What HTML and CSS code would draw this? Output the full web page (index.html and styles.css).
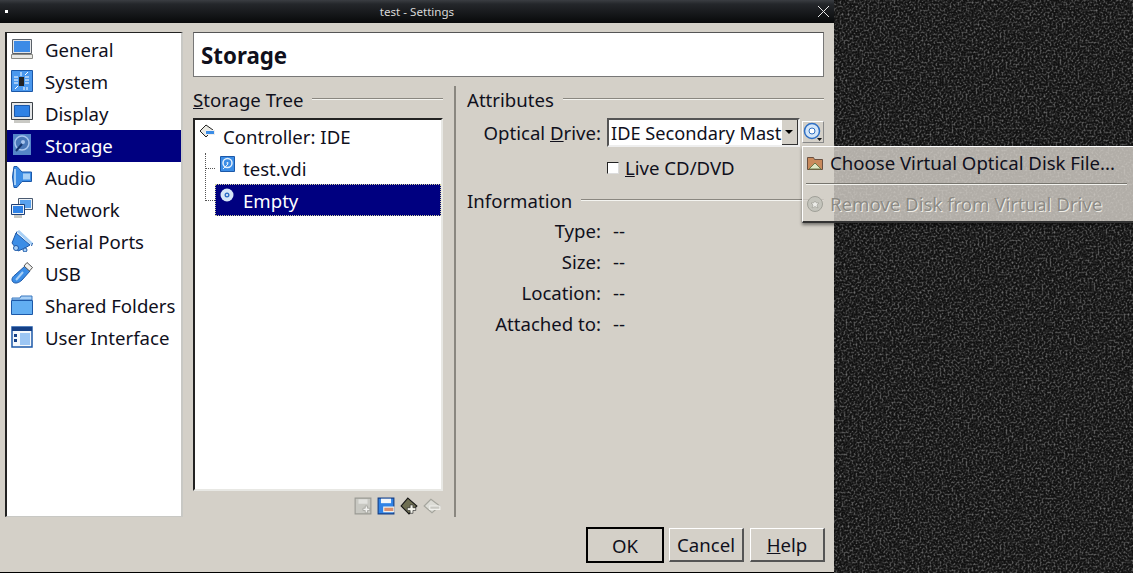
FILE: index.html
```html
<!DOCTYPE html>
<html lang="en">
<head>
<meta charset="UTF-8">
<title>test - Settings</title>
<link rel="stylesheet" href="styles.css">
</head>
<body>
<svg class="noise" aria-hidden="true">
  <filter id="grain">
    <feTurbulence type="fractalNoise" baseFrequency="0.5" numOctaves="3" seed="9"/>
    <feColorMatrix type="matrix" values="0 0 0 0 0.4  0 0 0 0 0.4  0 0 0 0 0.4  1.5 0 0 0 -0.66"/>
  </filter>
  <rect width="100%" height="100%" fill="#121212"/>
  <rect width="100%" height="100%" filter="url(#grain)"/>
</svg>

<div class="window">
  <div class="titlebar">
    <span class="title-dot"></span>
    <span class="title-text">test - Settings</span>
    <svg class="title-close" width="13" height="13" viewBox="0 0 13 13"><path d="M1 1l11 11M12 1L1 12" stroke="#e8e8e8" stroke-width="1" fill="none"/></svg>
  </div>

  <div class="content">
    <ul class="nav">
      <li class="nav-item">
        <svg class="nav-icon" viewBox="0 0 22 22"><path d="M1.500 1.500h19v14h-19z" fill="#e4e6e8" stroke="#5a6068"/><path d="M3 3h16v11H3z" fill="#3d8be6"/><path d="M.5 16.500h21v4H.5z" fill="#e8e8e4" stroke="#8a8a84"/></svg>
        <span>General</span>
      </li>
      <li class="nav-item">
        <svg class="nav-icon" viewBox="0 0 22 22"><path d="M.5 .5h21v21H.5z" fill="#4a98ee" stroke="#1c58a8"/><path d="M8 7h5v9H8z" fill="#222"/><path d="M3 7h4M3 10h4M3 13h4M14 7h4M14 10h4M14 13h4M4 19l3-3M10 2v4M14 5l3-3M13 17v3M16 17v3" stroke="#fff" fill="none"/></svg>
        <span>System</span>
      </li>
      <li class="nav-item">
        <svg class="nav-icon" viewBox="0 0 22 22"><path d="M.5 .5h21v17H.5z" fill="#e4e6e8" stroke="#3c4248"/><path d="M3.500 3.500h15v11h-15z" fill="#2f82e6" stroke="#1c58a8"/><path d="M3 18h16v3H3z" fill="#c9c9c4"/></svg>
        <span>Display</span>
      </li>
      <li class="nav-item nav-selected">
        <svg class="nav-icon" viewBox="0 0 22 22"><path d="M2 0h18v21H2z" fill="#5586c8"/><circle cx="11" cy="9" r="7" fill="#4a78b8" stroke="#a9c6ee" stroke-width="1.500"/><circle cx="12" cy="8" r="2" fill="#a9c6ee"/><path d="M5 17l6-7" stroke="#16366e" stroke-width="2"/></svg>
        <span>Storage</span>
      </li>
      <li class="nav-item">
        <svg class="nav-icon" viewBox="0 0 22 22"><path d="M3 .5h3L11 6h9.500v9.500H11L6 21.500H3Q0 11 3 .5z" fill="#3b8de6" stroke="#1c58a8"/><path d="M12 7.500h7v6h-7z" fill="#a8d0f6"/><path d="M4 3v16" stroke="#a8d0f6" stroke-width="2"/></svg>
        <span>Audio</span>
      </li>
      <li class="nav-item">
        <svg class="nav-icon" viewBox="0 0 22 22"><path d="M7.500 .5h14v11h-14z" fill="#eef2f6" stroke="#4a5a70"/><path d="M9 2h11v8H9z" fill="#5aa2ee"/><path d="M.5 6.500h13v10H.5z" fill="#eef2f6" stroke="#1c3f78"/><path d="M2 8h10v7H2z" fill="#2f82e6"/><path d="M3 17h8v3H3z" fill="#c8c8c2"/></svg>
        <span>Network</span>
      </li>
      <li class="nav-item">
        <svg class="nav-icon" viewBox="0 0 22 22"><path d="M5 3l14 12-5 3-7 3-6-8z" fill="#3b8de6" stroke="#1c58a8"/><path d="M7 1l14 13" stroke="#a8d0f6" stroke-width="3"/><path d="M6 1.500l-1 2M20.500 16l1-3" stroke="#1c58a8"/><circle cx="5" cy="18" r="2.500" fill="#a8d0f6" stroke="#1c58a8"/><circle cx="14" cy="20" r="2" fill="#a8d0f6" stroke="#1c58a8"/></svg>
        <span>Serial Ports</span>
      </li>
      <li class="nav-item">
        <svg class="nav-icon" viewBox="0 0 22 22"><path d="M14 4l5 5-8 9c-3 3-7 4-9 2s-1-5 2-7z" fill="#3b8de6" stroke="#1c58a8"/><path d="M16 .5l5.500 5-3 3.500-5.500-5z" fill="#f0f0ee" stroke="#555"/><path d="M5 18l7-8" stroke="#a8d0f6" stroke-width="2"/></svg>
        <span>USB</span>
      </li>
      <li class="nav-item">
        <svg class="nav-icon" viewBox="0 0 22 22"><path d="M1 6V4h8l1-2h11v4z" fill="#a8d0f6" stroke="#3a78c0"/><path d="M.5 6.500h21v14H.5z" fill="#62aef2" stroke="#1c58a8"/></svg>
        <span>Shared Folders</span>
      </li>
      <li class="nav-item">
        <svg class="nav-icon" viewBox="0 0 22 22"><path d="M1 1h20v20H1z" fill="#f4f8fc" stroke="#1c58a8" stroke-width="1.500"/><path d="M1 1h20v4H1z" fill="#143f86"/><path d="M9 7h10v12H9z" fill="#9cc6f4"/><path d="M3 8h3v3H3zM3 13h3v3H3z" fill="#143f86"/></svg>
        <span>User Interface</span>
      </li>
    </ul>

    <div class="main">
      <h1 class="heading">Storage</h1>

      <div class="panes">
        <div class="tree-pane">
          <div class="group-title"><span><u>S</u>torage Tree</span></div>
          <div class="tree">
            <div class="tree-row tree-controller">
              <svg class="tree-icon" viewBox="0 0 16 16"><path d="M7 1l7 5-7 7-6-6z" fill="#e8e8e2" stroke="#222"/><path d="M6.500 6.500h9v4h-9z" fill="#3b8de6" stroke="#eee"/></svg>
              <span>Controller: IDE</span>
            </div>
            <div class="tree-row tree-child">
              <span class="branch"></span>
              <svg class="tree-icon" viewBox="0 0 16 16"><path d="M.5 .5h14v15H.5z" fill="#3b8de6" stroke="#1c58a8"/><circle cx="7.500" cy="7" r="4.500" fill="none" stroke="#e6f0fb" stroke-width="1.500"/><circle cx="7.500" cy="7" r="1" fill="#e6f0fb"/><path d="M3 13l5-5" stroke="#e6f0fb"/></svg>
              <span>test.vdi</span>
            </div>
            <div class="tree-row tree-child tree-selected">
              <span class="branch branch-end"></span>
              <svg class="tree-icon" viewBox="0 0 16 16"><circle cx="7" cy="7" r="6.500" fill="#d6e6f8"/><circle cx="7" cy="7" r="2.500" fill="#2f6fc4"/><circle cx="7" cy="7" r="1" fill="#fff"/></svg>
              <span>Empty</span>
            </div>
          </div>
          <div class="tree-tools">
            <svg width="18" height="18" viewBox="0 0 16 16"><path d="M1 1h14v14H1z" fill="#c8c8c2" stroke="#9a9a94"/><path d="M4 2h8v4H4z" fill="#e2e2de"/><path d="M10 8v2H8v2h2v2h2v-2h2v-2h-2V8z" fill="#f2f2f0" stroke="#9a9a94" stroke-width=".6"/></svg>
            <svg width="18" height="18" viewBox="0 0 16 16"><path d="M1 1h14v14H1z" fill="#2f82e6" stroke="#143f86"/><path d="M3.500 1.500h9v4h-9z" fill="#f2f6fa"/><path d="M6 9h9v4H6z" fill="#d99070" stroke="#f4f0e8"/></svg>
            <svg width="18" height="18" viewBox="0 0 16 16"><path d="M7 1l8 7-7 7-7-7z" fill="#6f6f52" stroke="#161616"/><path d="M9 7v2.500H6.500v2.500H9v2.500h2.500V12H14V9.500h-2.500V7z" fill="#f4f4ec" stroke="#333" stroke-width=".6"/></svg>
            <svg width="18" height="18" viewBox="0 0 16 16"><path d="M7 2l8 6-7 6-7-6z" fill="#dcdcd6" stroke="#a4a49c"/><path d="M6 8h9v3H6z" fill="#c8c8c2" stroke="#f0f0ec"/></svg>
          </div>
        </div>

        <div class="attr-pane">
          <div class="group-title"><span>Attributes</span></div>
          <div class="form-row form-drive">
            <label class="form-label">Optical <u>D</u>rive:</label>
            <div class="combo">
              <span class="combo-text">IDE Secondary Mast</span>
              <span class="combo-arrow"></span>
            </div>
            <button class="disk-btn" type="button">
              <svg width="20" height="20" viewBox="0 0 20 20"><circle cx="9" cy="9" r="7.500" fill="#d4e6f8" stroke="#2f6fc4" stroke-width="1.500"/><circle cx="9" cy="9" r="3" fill="#fff" stroke="#2f6fc4"/><path d="M14 16h5l-2.500 3z" fill="#111"/></svg>
            </button>
          </div>
          <div class="check-row">
            <span class="checkbox"></span>
            <span><u>L</u>ive CD/DVD</span>
          </div>
          <div class="group-title group-info"><span>Information</span></div>
          <div class="info-row"><span class="form-label">Type:</span><span>--</span></div>
          <div class="info-row"><span class="form-label">Size:</span><span>--</span></div>
          <div class="info-row"><span class="form-label">Location:</span><span>--</span></div>
          <div class="info-row"><span class="form-label">Attached to:</span><span>--</span></div>
        </div>
      </div>
    </div>
  </div>

  <div class="buttons">
    <button class="btn btn-default" type="button">OK</button>
    <button class="btn" type="button">Cancel</button>
    <button class="btn" type="button"><u>H</u>elp</button>
  </div>
</div>

<div class="menu">
  <div class="menu-item">
    <svg width="18" height="18" viewBox="0 0 18 18"><path d="M1.500 3.500h6l1 2h8v10h-15z" fill="#c98a5c" stroke="#6a5040"/><path d="M3 15l6-6 6 6z" fill="#dfe6c4" stroke="#6c7a48"/></svg>
    <span>Choose Virtual Optical Disk File...</span>
  </div>
  <div class="menu-sep"></div>
  <div class="menu-item menu-disabled">
    <svg width="18" height="18" viewBox="0 0 18 18"><circle cx="9" cy="9" r="7.500" fill="#c4c4bc" stroke="#a0a098"/><path d="M9 6l1.500 2H13l-2 2 1 3-3-1.500L6 13l1-3-2-2h2.500z" fill="#ecece8" stroke="#9a9a92" stroke-width=".6"/></svg>
    <span>Remove Disk from Virtual Drive</span>
  </div>
</div>
</body>
</html>
```

FILE: styles.css
```css
html, body {
  margin: 0;
  height: 100%;
  overflow: hidden;
}

body {
  background-color: #121212;
  font-family: "Noto Sans", "Open Sans", sans-serif;
  font-size: 18.6px;
  color: #10101c;
}

.noise {
  position: absolute;
  left: 0;
  top: 0;
  width: 100%;
  height: 100%;
}

.window {
  position: relative;
  width: 834px;
  height: 572px;
  background-color: #d4d0c8;
  border-bottom: 1px solid #000;
  display: flex;
  flex-direction: column;
}

.titlebar {
  height: 23px;
  flex: none;
  background: linear-gradient(#3a3d42 0, #24272b 4px, #08090a 100%);
  display: flex;
  align-items: center;
  justify-content: center;
  position: relative;
  color: #d8d8d8;
  font-size: 11.6px;
}

.title-dot {
  position: absolute;
  left: 5px;
  top: 10px;
  width: 3px;
  height: 3px;
  background-color: #fff;
}

.title-close {
  position: absolute;
  right: 4px;
  top: 5px;
}

.content {
  display: flex;
  flex: 1;
  min-height: 0;
  padding: 9px 10px 0 5px;
  gap: 10px;
}

.nav {
  list-style: none;
  margin: 0;
  padding: 1px 0 0;
  box-sizing: border-box;
  width: 178px;
  height: 485px;
  background-color: #fff;
  border-top: 1px solid #222;
  border-left: 2px solid #222;
  border-right: 2px solid #c8c8c4;
  border-bottom: 1px solid #c8c8c4;
}

.nav-item {
  box-sizing: border-box;
  height: 32px;
  display: flex;
  align-items: center;
  padding: 0 0 2px 4px;
  gap: 12px;
}

.nav-icon {
  width: 22px;
  height: 22px;
  flex: none;
}

.nav-selected {
  background-color: #000080;
  color: #fff;
}

.main {
  flex: 1;
  min-width: 0;
  display: flex;
  flex-direction: column;
}

.heading {
  margin: 0;
  box-sizing: border-box;
  height: 45px;
  padding-left: 7px;
  line-height: 45px;
  font-size: 22.3px;
  font-weight: bold;
  background-color: #fff;
  border: 1px solid #777;
  border-top-color: #555;
}

.panes {
  display: flex;
  margin-top: 9px;
}

.tree-pane {
  width: 250px;
  flex: none;
  padding-right: 11px;
  border-right: 2px solid #8a8780;
  height: 431px;
}

.group-title {
  display: flex;
  align-items: center;
  gap: 9px;
  height: 26px;
}

.group-title::after {
  content: "";
  flex: 1;
  height: 1px;
  background-color: #8a8780;
  border-bottom: 1px solid #f4f4f0;
}

.tree {
  box-sizing: border-box;
  margin-top: 6px;
  height: 373px;
  background-color: #fff;
  border: 2px solid #222;
  border-right-color: #e8e8e4;
  border-bottom-color: #e8e8e4;
}

.tree-row {
  box-sizing: border-box;
  height: 32px;
  display: flex;
  align-items: center;
  position: relative;
}

.tree-icon {
  width: 16px;
  height: 16px;
  flex: none;
  margin-top: -8px;
}

.tree-controller {
  padding-left: 4px;
  gap: 8px;
}

.tree-child {
  margin-left: 20px;
  padding-left: 5px;
  gap: 7px;
}

.tree-selected {
  background-color: #000080;
  color: #fff;
  outline: 1px dotted #cfcf9a;
  outline-offset: -1px;
}

.branch {
  position: absolute;
  left: -10px;
  top: 1px;
  width: 9px;
  height: 15px;
  border-left: 1px dotted #555;
  border-bottom: 1px dotted #555;
}

.branch-end {
  top: -16px;
  height: 32px;
}

.tree-tools {
  display: flex;
  justify-content: flex-end;
  gap: 5px;
  margin-top: 6px;
  padding-right: 2px;
}

.attr-pane {
  flex: 1;
  min-width: 0;
  padding-left: 11px;
}

.form-label {
  width: 134px;
  flex: none;
  text-align: right;
}

.form-row {
  display: flex;
  align-items: center;
}

.form-drive {
  margin-top: 4px;
  height: 32px;
}

.combo {
  box-sizing: border-box;
  flex: none;
  margin-left: 6px;
  width: 193px;
  height: 29px;
  display: flex;
  align-items: center;
  background-color: #fff;
  border: 2px solid #555;
  border-right-color: #eee;
  border-bottom-color: #eee;
  padding-left: 2px;
}

.combo-text {
  flex: 1;
  min-width: 0;
  margin-top: 2px;
  overflow: hidden;
  white-space: nowrap;
  font-size: 18.2px;
}

.combo-arrow {
  box-sizing: border-box;
  flex: none;
  width: 16px;
  height: 25px;
  background-color: #d4d0c8;
  border-right: 1px solid #333;
  border-bottom: 1px solid #333;
  position: relative;
}

.combo-arrow::after {
  content: "";
  position: absolute;
  left: 3px;
  top: 10px;
  border: 4px solid transparent;
  border-top: 4px solid #000;
  border-bottom: 0;
}

.disk-btn {
  box-sizing: border-box;
  flex: none;
  margin-left: 2px;
  width: 22px;
  height: 22px;
  padding: 0;
  display: flex;
  align-items: center;
  justify-content: center;
  background-color: #d4d0c8;
  border: 1px solid #fff;
  border-right-color: #888;
  border-bottom-color: #888;
}

.check-row {
  display: flex;
  align-items: center;
  gap: 6px;
  margin-left: 140px;
  height: 39px;
}

.checkbox {
  box-sizing: border-box;
  width: 12px;
  height: 12px;
  background-color: #fff;
  border: 1px solid #222;
  border-right-color: #ddd;
  border-bottom-color: #ddd;
}

.group-info {
  margin-bottom: 2px;
}

.info-row {
  display: flex;
  gap: 12px;
  height: 31px;
  align-items: center;
}

.buttons {
  display: flex;
  justify-content: flex-end;
  align-items: center;
  gap: 6px;
  padding: 0 9px 10px 0;
}

.btn {
  box-sizing: border-box;
  width: 75px;
  height: 34px;
  padding: 0;
  font-family: inherit;
  font-size: 18.6px;
  color: inherit;
  background-color: #d4d0c8;
  border: 1px solid #fff;
  border-right: 2px solid #555;
  border-bottom: 2px solid #555;
}

.btn-default {
  width: 78px;
  height: 36px;
  margin: -1px -1px -1px 0;
  border: 2px solid #000;
}

.menu {
  position: absolute;
  left: 802px;
  top: 146px;
  width: 331px;
  height: 77px;
  box-sizing: border-box;
  background-color: rgba(212, 208, 200, 0.82);
  border-top: 1px solid #fff;
  border-left: 1px solid #fff;
  border-bottom: 2px solid #333;
  box-shadow: 0 2px 3px rgba(0, 0, 0, 0.45);
}

.menu-item {
  box-sizing: border-box;
  display: flex;
  align-items: center;
  gap: 6px;
  height: 34px;
  padding: 0 0 3px 3px;
}

.menu-sep {
  height: 1px;
  margin: 2px 6px 2px 3px;
  background-color: #77756e;
  border-bottom: 1px solid #f4f4f0;
}

.menu-disabled {
  padding-bottom: 1px;
  color: #8c8a84;
  text-shadow: 1px 1px 0 #f0eee8;
}
```
